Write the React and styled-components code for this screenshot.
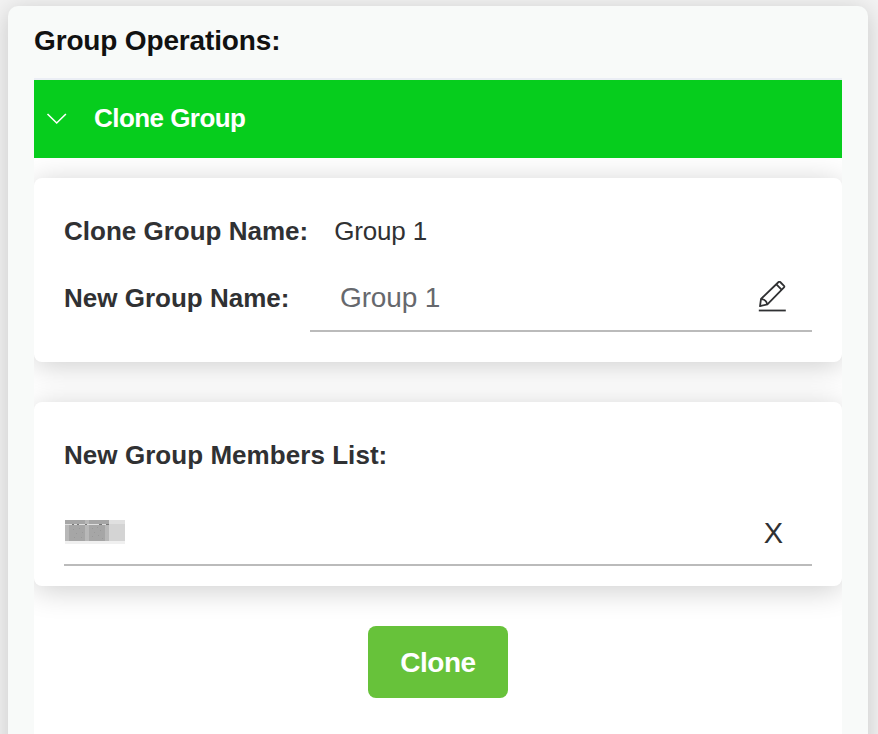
import React from 'react';
import styled, { createGlobalStyle } from 'styled-components';

const members = [{ id: 1 }];

function App() {
  return (
    <>
      <GlobalStyle />
      <Page>
        <Panel>
          <PanelTitle>Group Operations:</PanelTitle>
          <Collapse>
            <CollapseHeader>
              <svg width="22" height="14" viewBox="0 0 22 14">
                <path d="M1.5 2L10.7 11L19.9 2" fill="none" stroke="#fff" strokeWidth="1.6" />
              </svg>
              <span>Clone Group</span>
            </CollapseHeader>
            <CollapseBody>
              <Card>
                <NameRow>
                  <Label>Clone Group Name:</Label>
                  <GroupName>Group 1</GroupName>
                </NameRow>
                <InputRow>
                  <Label>New Group Name:</Label>
                  <InputField>
                    <input type="text" placeholder="Group 1" />
                    <EditIcon />
                  </InputField>
                </InputRow>
              </Card>
              <Card>
                <ListTitle>New Group Members List:</ListTitle>
                {members.map((member) => (
                  <MemberRow key={member.id}>
                    <MaskedName />
                    <RemoveButton>X</RemoveButton>
                  </MemberRow>
                ))}
              </Card>
              <CloneButton>Clone</CloneButton>
            </CollapseBody>
          </Collapse>
        </Panel>
      </Page>
    </>
  );
}

export default App;

function EditIcon() {
  return (
    <svg width="30" height="32" viewBox="0 0 30 32" fill="none" stroke="#303133" strokeWidth="1.8">
      <path d="M2 25.2L3 18L20.6 1Q21.4 .3 22.2 1L26 4.8Q26.7 5.6 26 6.4L9.4 23.3Z" strokeLinejoin="round" />
      <path d="M18.4 3.4L23.8 8.8M3.2 18Q8.4 18.4 9.2 23.5" />
      <path d="M.8 29.5H27.8" strokeWidth="1.8" />
    </svg>
  );
}

// pixelated block that hides the member's name
function MaskedName() {
  return (
    <svg width="62" height="26" viewBox="0 0 62 26" shapeRendering="crispEdges">
      <path fill="#f0f0f0" d="M1 21h60v3H1z" />
      <path fill="#a6a6a6" d="M1 0h44v21H1z" />
      <path fill="#b8b8b8" d="M1 5h4v16H1zM21 0h4v21h-4zM41 5h4v16h-4z" />
      <path fill="#d4d4d4" d="M45 4h16v17H45z" />
      <path fill="#e0e0e0" d="M45 0h16v4H45z" />
      <path fill="#dedede" d="M1 4h44v1H1z" />
      <path fill="#777" d="M8 4h2v1H8zM13 4h2v1h-2zM21 4h2v1h-2zM35 4h3v1h-3zM42 4h3v1h-3z" />
      <path fill="#999" d="M9 9h1v1H9zM15 8h1v1h-1zM12 13h1v1h-1zM18 12h1v1h-1zM10 17h1v1h-1zM17 17h1v1h-1zM28 8h1v1h-1zM33 7h1v1h-1zM30 12h1v1h-1zM36 10h1v1h-1zM28 16h1v1h-1zM34 15h1v1h-1zM38 18h1v1h-1z" />
    </svg>
  );
}

const GlobalStyle = createGlobalStyle`
  * {
    box-sizing: border-box;
  }

  body {
    margin: 0;
    overflow: hidden;
    background-color: #f3f3f3;
    font-family: "Liberation Sans", Arial, sans-serif;
    color: #303133;
  }
`;

const Page = styled.div`
  height: 734px;
  padding: 6px 10px 0 8px;
  overflow: hidden;
`;

const Panel = styled.div`
  height: 800px;
  padding: 18px 26px 0;
  border-radius: 10px;
  background-color: #f8faf9;
  box-shadow: 0 4px 24px rgba(0, 0, 0, 0.18);
`;

const PanelTitle = styled.div`
  height: 54px;
  line-height: 34px;
  font-size: 28px;
  font-weight: bold;
  letter-spacing: -0.15px;
  color: #111;
`;

const Collapse = styled.div`
  border-top: 2px solid #ebeef5;
`;

const CollapseHeader = styled.div`
  display: flex;
  align-items: center;
  gap: 26px;
  height: 78px;
  padding-left: 12px;
  background-color: #06cd1d;
  color: white;
  font-size: 26px;
  font-weight: bold;
  letter-spacing: -0.55px;

  > span {
    padding-bottom: 2px;
  }
`;

const CollapseBody = styled.div`
  display: flex;
  flex-direction: column;
  height: 640px;
  padding-top: 20px;
  overflow: hidden;
  background-color: white;
`;

const Card = styled.div`
  height: 184px;
  margin-bottom: 40px;
  padding: 30px;
  border-radius: 8px;
  background-color: white;
  box-shadow: 0 4px 30px rgba(0, 0, 0, 0.2);
`;

const NameRow = styled.div`
  display: flex;
  align-items: center;
  gap: 26px;
  height: 46px;
`;

const InputRow = styled.div`
  display: flex;
  justify-content: space-between;
  height: 78px;

  > span {
    line-height: 88px;
  }
`;

const Label = styled.span`
  font-size: 26px;
  font-weight: bold;
`;

const GroupName = styled.span`
  font-size: 26px;
  letter-spacing: -0.15px;
`;

const InputField = styled.div`
  display: flex;
  align-items: center;
  justify-content: space-between;
  width: 502px;
  padding: 10px 24px 0 30px;
  border-bottom: 2px solid #bbb;

  > input {
    width: 300px;
    padding: 2px 0 0;
    border: none;
    outline: 0;
    background: none;
    font-family: inherit;
    font-size: 28px;
    letter-spacing: -0.15px;
  }

  > input::placeholder {
    color: #66686d;
  }
`;

const ListTitle = styled(Label)`
  display: block;
  height: 68px;
  line-height: 46px;
  letter-spacing: 0.05px;
`;

const MemberRow = styled.div`
  display: flex;
  align-items: center;
  justify-content: space-between;
  height: 66px;
  padding: 2px 29px 0 0;
  border-bottom: 2px solid #bbb;
`;

const RemoveButton = styled.button`
  padding: 0;
  border: none;
  background: none;
  color: #303133;
  font-family: "Liberation Sans", Arial, sans-serif;
  font-size: 29px;
  cursor: pointer;
`;

const CloneButton = styled.button`
  align-self: center;
  width: 140px;
  height: 72px;
  padding: 2px 0 0;
  border: none;
  border-radius: 8px;
  background-color: #67c23a;
  color: white;
  font-family: inherit;
  font-size: 28px;
  font-weight: bold;
  letter-spacing: -0.5px;
  cursor: pointer;
`;
